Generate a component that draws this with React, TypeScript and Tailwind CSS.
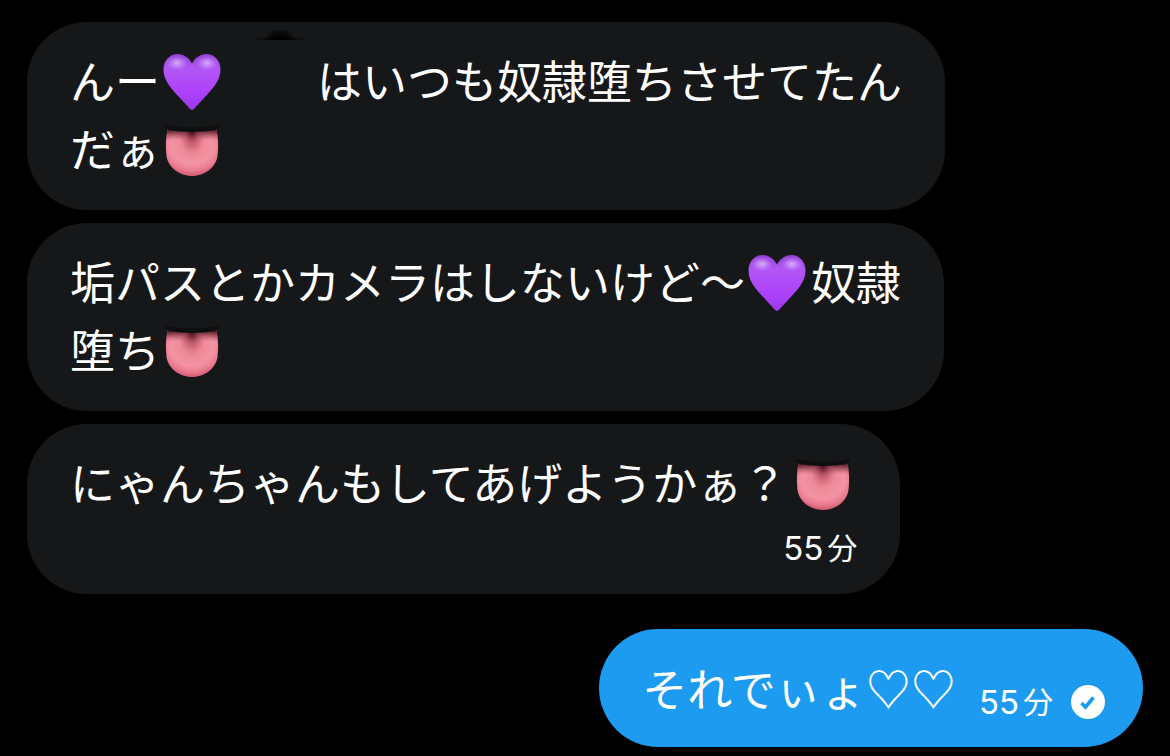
import type { ReactNode } from 'react'
import clsx from 'clsx'

function PurpleHeart() {
  return (
    <svg viewBox="-1 0 66 68" role="img" aria-label="紫のハート" className="w-[66px] h-[68px] shrink-0">
      <defs>
        <linearGradient id="heart-fill" x1="0" y1="0" x2="0" y2="1">
          <stop offset="0" stopColor="#8e3fd0" />
          <stop offset="0.25" stopColor="#b157f3" />
          <stop offset="0.65" stopColor="#ae42fb" />
          <stop offset="1" stopColor="#9d38ec" />
        </linearGradient>
        <radialGradient id="heart-shine">
          <stop offset="0" stopColor="#e6c0ff" stopOpacity="0.85" />
          <stop offset="0.5" stopColor="#d29bff" stopOpacity="0.5" />
          <stop offset="1" stopColor="#bd6bff" stopOpacity="0" />
        </radialGradient>
      </defs>
      <path
        d="M31 64 C29.500 64 26 59.500 19 52 C10 42.500 2.500 34.500 2.500 23.500 C2.500 14 9 8 16.500 8 C23.500 8 28.500 12.500 31 17.500 C33.500 12.500 38.500 8 45.500 8 C53 8 59.500 14 59.500 23.500 C59.500 34.500 52 42.500 43 52 C36 59.500 32.500 64 31 64 Z"
        fill="url(#heart-fill)"
      />
      <ellipse cx="16" cy="17" rx="12" ry="8" fill="url(#heart-shine)" />
      <ellipse cx="46" cy="17" rx="12" ry="8" fill="url(#heart-shine)" />
    </svg>
  )
}

function Tongue() {
  return (
    <svg viewBox="-1 -1 66 68" role="img" aria-label="舌" className="w-[66px] h-[68px] shrink-0">
      <defs>
        <radialGradient id="tongue-fill" cx="0.5" cy="0.35" r="0.66">
          <stop offset="0" stopColor="#e8808f" />
          <stop offset="0.6" stopColor="#f394a3" />
          <stop offset="0.8" stopColor="#ea7a8f" />
          <stop offset="1" stopColor="#cb4e6b" />
        </radialGradient>
        <linearGradient id="tongue-shade" x1="0" y1="0" x2="0" y2="1">
          <stop offset="0" stopColor="#1c080c" />
          <stop offset="0.1" stopColor="#5c1f2c" stopOpacity="0.7" />
          <stop offset="0.26" stopColor="#b5475c" stopOpacity="0" />
        </linearGradient>
        <radialGradient id="tongue-groove">
          <stop offset="0" stopColor="#3c0c18" stopOpacity="0.9" />
          <stop offset="0.45" stopColor="#8e3044" stopOpacity="0.5" />
          <stop offset="1" stopColor="#c35064" stopOpacity="0" />
        </radialGradient>
        <clipPath id="tongue-shape">
          <path d="M7 13 L55 13 C57.500 22 57.500 32 56.500 41 C55 52 44 61 31 61 C18 61 7 52 5.500 41 C4.500 32 4.500 22 7 13 Z" />
        </clipPath>
      </defs>
      <g clipPath="url(#tongue-shape)">
        <rect x="4" y="13" width="54" height="49" fill="url(#tongue-fill)" />
        <rect x="4" y="13" width="54" height="49" fill="url(#tongue-shade)" />
        <ellipse cx="31" cy="17" rx="14" ry="22" fill="url(#tongue-groove)" />
      </g>
      <path d="M3 10 Q31 15 59 10 L55 15 Q31 19 7 15 Z" fill="#0e0f10" />
    </svg>
  )
}

function ReadBadge() {
  return (
    <svg viewBox="0 0 34 34" role="img" aria-label="既読" className="w-[34px] h-[34px] shrink-0">
      <circle cx="17" cy="17" r="17" fill="#fff" />
      <path d="M10.500 18 L14.500 22 L22.500 12.500" fill="none" stroke="#1d9bf0" strokeWidth="3.600" />
    </svg>
  )
}

// Hidden name, with a faint trace of the marker above it
function HiddenName() {
  return (
    <span className="relative block w-[91px] h-[68px] shrink-0">
      <svg viewBox="0 0 60 12" aria-hidden="true" className="absolute left-6 -top-4 w-[60px] h-3">
        <defs>
          <radialGradient id="smudge" gradientUnits="userSpaceOnUse" cx="0" cy="0" r="1" gradientTransform="translate(30 10) scale(16 12)">
            <stop offset="0" stopColor="#000" />
            <stop offset="0.5" stopColor="#000" stopOpacity="0.8" />
            <stop offset="1" stopColor="#000" stopOpacity="0" />
          </radialGradient>
          <radialGradient id="smudge-base" gradientUnits="userSpaceOnUse" cx="0" cy="0" r="1" gradientTransform="translate(30 10) scale(30 4)">
            <stop offset="0" stopColor="#000" />
            <stop offset="1" stopColor="#000" stopOpacity="0" />
          </radialGradient>
        </defs>
        <rect width="60" height="10" fill="url(#smudge-base)" />
        <rect width="60" height="10" fill="url(#smudge)" />
      </svg>
    </span>
  )
}

function Line({ children }: { children: ReactNode }) {
  return (
    <p className="flex items-center text-[45px] leading-[68px] whitespace-nowrap font-['Noto_Sans_CJK_JP',sans-serif]">
      {children}
    </p>
  )
}

function Time({ className }: { className?: string }) {
  return (
    <time className={clsx('flex items-center gap-1 whitespace-nowrap', className)}>
      <span className="text-[33px] leading-10">55</span>
      <span className="text-[30px] leading-10">分</span>
    </time>
  )
}

function Received({ children }: { children: ReactNode }) {
  return (
    <li className="w-fit rounded-[60px] bg-[#151719] px-[43px] pt-6 pb-7">{children}</li>
  )
}

export default function App() {
  return (
    <main className="min-h-screen bg-black pt-[22px] pb-2 px-[27px] text-white font-['Inter','Noto_Sans_CJK_JP',sans-serif]">
      <ul className="flex flex-col gap-[13px]">
        <Received>
          <Line>
            <span>んー</span>
            <PurpleHeart />
            <HiddenName />
            <span>はいつも奴隷堕ちさせてたん</span>
          </Line>
          <Line>
            <span>だぁ</span>
            <Tongue />
          </Line>
        </Received>
        <Received>
          <Line>
            <span>垢パスとかカメラはしないけど〜</span>
            <PurpleHeart />
            <span>奴隷</span>
          </Line>
          <Line>
            <span>堕ち</span>
            <Tongue />
          </Line>
        </Received>
        <Received>
          <Line>
            <span className="pr-1">にゃんちゃんもしてあげようかぁ？</span>
            <Tongue />
          </Line>
          <Time className="mt-3 -mb-0.5 justify-end" />
        </Received>
        <li className="mt-[22px] flex w-fit items-center self-end rounded-full bg-[#1d9bf0] py-[25px] pl-[43px] pr-[38px]">
          <Line>
            <span>それでぃょ</span>
            <span className="font-medium">♡♡</span>
          </Line>
          <span className="ml-[23px] mt-7 flex items-center gap-[18px]">
            <Time />
            <ReadBadge />
          </span>
        </li>
      </ul>
    </main>
  )
}
